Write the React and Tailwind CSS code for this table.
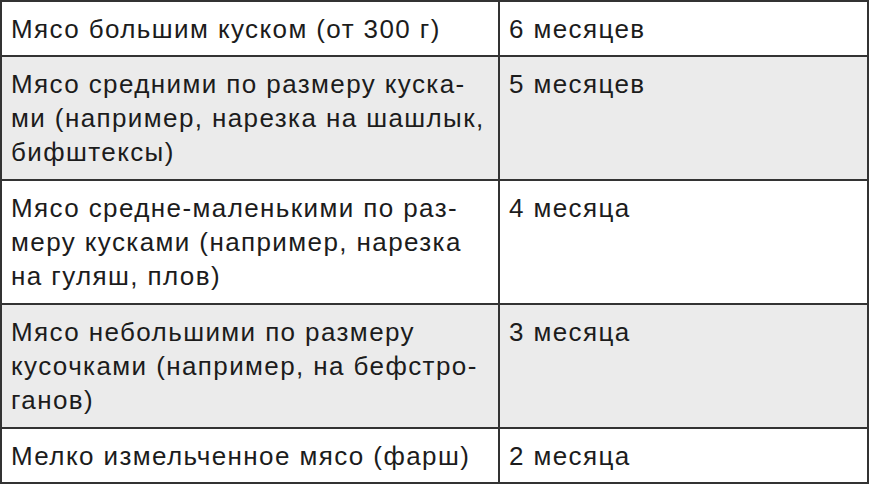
import React from "react";

const rows = [
  { what: ["Мясо большим куском (от 300 г)"], term: "6 месяцев", gray: false },
  {
    what: ["Мясо средними по размеру куска-", "ми (например, нарезка на шашлык,", "бифштексы)"],
    term: "5 месяцев",
    gray: true,
  },
  {
    what: ["Мясо средне-маленькими по раз-", "меру кусками (например, нарезка", "на гуляш, плов)"],
    term: "4 месяца",
    gray: false,
  },
  {
    what: ["Мясо небольшими по размеру", "кусочками (например, на бефстро-", "ганов)"],
    term: "3 месяца",
    gray: true,
  },
  { what: ["Мелко измельченное мясо (фарш)"], term: "2 месяца", gray: false },
];

export default function App() {
  return (
    <div className="w-[869px] h-[484px] bg-white overflow-hidden">
      <table
        className="w-[869px] border-collapse text-[26px] leading-[34px] tracking-[1.4px] text-[#1c1c1c]"
        style={{ fontFamily: '"Liberation Sans", Arial, sans-serif' }}
      >
        <tbody>
          {rows.map((r, i) => {
            const pad = r.what.length > 1 ? "pt-[10px] pb-[10px]" : "pt-[10px] pb-[9px]";
            return (
              <tr key={i} className={r.gray ? "bg-[#ebebeb]" : "bg-white"}>
                <td className={"w-[498px] border-2 border-[#333] align-top pl-[9px] pr-2 whitespace-nowrap " + pad}>
                  {r.what.map((line, j) => (
                    <div key={j}>{line}</div>
                  ))}
                </td>
                <td className={"border-2 border-[#333] align-top pl-[9px] pr-2 whitespace-nowrap " + pad}>
                  {r.term}
                </td>
              </tr>
            );
          })}
        </tbody>
      </table>
    </div>
  );
}
